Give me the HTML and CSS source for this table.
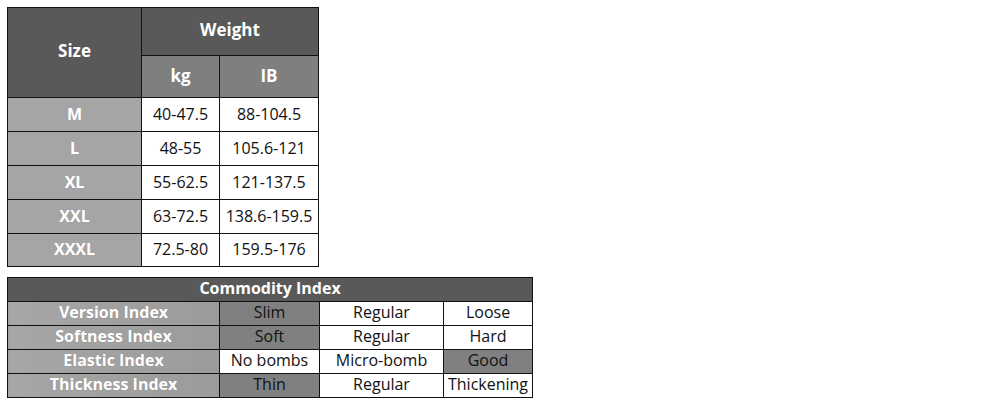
FILE: index.html
```html
<!DOCTYPE html>
<html>
<head>
<meta charset="utf-8">
<link rel="stylesheet" href="styles.css">
</head>
<body>
<table class="size-table">
  <colgroup>
    <col class="c-size">
    <col class="c-kg">
    <col class="c-ib">
  </colgroup>
  <tr class="r-top">
    <th class="dark" rowspan="2">Size</th>
    <th class="dark" colspan="2">Weight</th>
  </tr>
  <tr class="r-sub">
    <th class="mid">kg</th>
    <th class="mid">IB</th>
  </tr>
  <tr class="r-data"><th class="light">M</th><td>40-47.5</td><td>88-104.5</td></tr>
  <tr class="r-data"><th class="light">L</th><td>48-55</td><td>105.6-121</td></tr>
  <tr class="r-data"><th class="light">XL</th><td>55-62.5</td><td>121-137.5</td></tr>
  <tr class="r-data"><th class="light">XXL</th><td>63-72.5</td><td>138.6-159.5</td></tr>
  <tr class="r-last"><th class="light">XXXL</th><td>72.5-80</td><td>159.5-176</td></tr>
</table>

<table class="index-table">
  <colgroup>
    <col class="i-label">
    <col class="i-a">
    <col class="i-b">
    <col class="i-c">
  </colgroup>
  <tr><th class="dark title" colspan="4">Commodity Index</th></tr>
  <tr><th class="label">Version Index</th><td class="sel">Slim</td><td>Regular</td><td>Loose</td></tr>
  <tr><th class="label">Softness Index</th><td class="sel">Soft</td><td>Regular</td><td>Hard</td></tr>
  <tr><th class="label">Elastic Index</th><td>No bombs</td><td>Micro-bomb</td><td class="sel">Good</td></tr>
  <tr><th class="label">Thickness Index</th><td class="sel">Thin</td><td>Regular</td><td>Thickening</td></tr>
</table>
</body>
</html>
```

FILE: styles.css
```css
html, body {
  margin: 0;
  background: #ffffff;
}
body {
  padding: 7px;
  font-family: "Open Sans", "Noto Sans", sans-serif;
  color: #111;
}
table {
  border-collapse: collapse;
  table-layout: fixed;
  font-size: 16px;
}
th, td {
  border: 1px solid #111;
  padding: 0 0 2px 0;
  text-align: center;
  vertical-align: middle;
  white-space: nowrap;
  overflow: hidden;
}
th {
  color: #fff;
  font-weight: 700;
}
td {
  background: #fff;
  font-weight: 400;
}
.size-table {
  width: 311px;
  border-left: 1px solid #9a9a9a;
  border-top: 1px solid #9a9a9a;
}
.size-table th { font-size: 17px; }
.size-table th.light { font-size: 16px; }
.c-size { width: 134px; }
.c-kg { width: 78px; }
.c-ib { width: 99px; }
.r-top { height: 48px; }
.r-top th { padding-bottom: 4px; }
.r-sub { height: 42px; }
.r-data { height: 34px; }
.r-last { height: 33px; }
.dark { background: #595959; }
.mid { background: #7f7f7f; }
.light { background: #a5a5a5; }

.index-table {
  margin-top: 10px;
  width: 525px;
}
.index-table tr { height: 24px; }
.index-table th, .index-table td { line-height: 20px; padding: 0 0 3px 0; }
.i-label { width: 212px; }
.i-a { width: 100px; }
.i-b { width: 124px; }
.i-c { width: 89px; }
.title { font-size: 16px; }
.label {
  background: linear-gradient(to right, #a6a6a6, #9b9b9b);
  text-shadow: 0 0 1px rgba(0,0,0,0.15);
}
.index-table td.sel { background: #808080; color: #111; }
```
